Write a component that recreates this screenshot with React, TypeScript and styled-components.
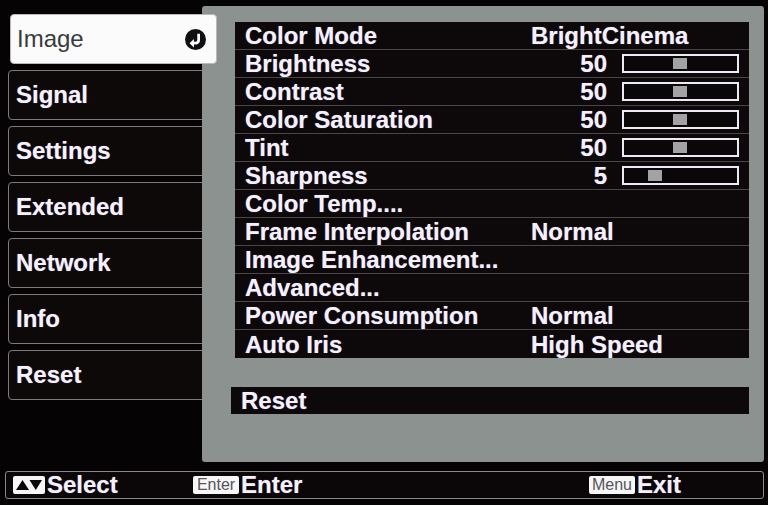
import React from "react";
import styled, { createGlobalStyle, css } from "styled-components";

const GlobalStyle = createGlobalStyle`
  html, body {
    margin: 0;
    padding: 0;
    background: #060304;
  }
  body {
    font-family: "Liberation Sans", Arial, sans-serif;
    color: #f5f1fa;
  }
`;

const Screen = styled.div`
  width: 768px;
  height: 505px;
  box-sizing: border-box;
  padding: 6px 4px 0 5px;
  display: flex;
  flex-direction: column;
  gap: 9px;
  background: #060304;
  overflow: hidden;
`;

const Main = styled.div`
  display: flex;
  height: 456px;
`;

const TabColumn = styled.div`
  width: 194px;
  padding: 8px 0 0 3px;
  display: flex;
  flex-direction: column;
  gap: 6px;
`;

const Tab = styled.div<{ $active?: boolean }>`
  height: 50px;
  box-sizing: border-box;
  border: 1px solid #7d7b80;
  border-radius: 4px;
  background: #0d0909;
  display: flex;
  align-items: center;
  justify-content: space-between;
  padding: 0 10px 0 7px;
  margin-right: -8px;
  font-size: 24px;
  font-weight: bold;
  color: #f6f2fa;
  text-shadow: 0 0 1px rgba(200, 180, 255, 0.6);

  ${(p) =>
    p.$active &&
    css`
      position: relative;
      z-index: 3;
      background: #fbfbfb;
      border-color: #b9b6bd;
      margin: 0 -15px 0 2px;
      padding-left: 6px;
      color: #3a3a3c;
      font-weight: normal;
      text-shadow: none;
    `}
`;

const Panel = styled.div`
  flex: 1;
  position: relative;
  z-index: 1;
  background: #8c928f;
  border-radius: 3px;
  padding: 16px 15px 0 33px;
  display: flex;
  flex-direction: column;
`;

const RowList = styled.div`
  display: flex;
  flex-direction: column;
  background: #0d090a;
`;

const Row = styled.div<{ $last?: boolean }>`
  height: 28px;
  box-sizing: border-box;
  display: grid;
  grid-template-columns: 286px 1fr;
  align-items: center;
  padding-left: 10px;
  font-size: 24px;
  font-weight: bold;
  line-height: 27px;
  border-bottom: ${(p) => (p.$last ? "none" : "1px solid #4a4648")};
  white-space: nowrap;
  text-shadow: 0 0 1px rgba(200, 180, 255, 0.6);
`;

const Label = styled.span``;

const Value = styled.div`
  display: flex;
  align-items: center;
`;

const Number = styled.span`
  width: 76px;
  text-align: right;
  margin-right: 15px;
`;

const Track = styled.div`
  width: 117px;
  height: 19px;
  box-sizing: border-box;
  border: 2px solid #eee9f5;
  background: #0a0708;
  position: relative;
`;

const Knob = styled.div`
  position: absolute;
  top: 2px;
  width: 14px;
  height: 11px;
  background: #a3a3a5;
`;

const ResetRow = styled.div`
  margin-top: 29px;
  height: 27px;
  background: #0d090a;
  padding-left: 10px;
  font-size: 24px;
  font-weight: bold;
  line-height: 28px;
  margin-left: -4px;
  text-shadow: 0 0 1px rgba(200, 180, 255, 0.6);
`;

const Footer = styled.div`
  height: 28px;
  box-sizing: border-box;
  border: 1px solid #8a888c;
  border-radius: 3px;
  background: #0b0708;
  display: flex;
  align-items: center;
  padding-left: 7px;
  font-size: 24px;
  font-weight: bold;
  text-shadow: 0 0 1px rgba(200, 180, 255, 0.6);
`;

const Hint = styled.div<{ $width: number }>`
  width: ${(p) => p.$width}px;
  display: flex;
  align-items: center;
  gap: 2px;
`;

const KeyCap = styled.span`
  background: #f7f7f7;
  color: #55555a;
  font-size: 16px;
  font-weight: normal;
  height: 18px;
  line-height: 18px;
  width: 46px;
  text-align: center;
  border-radius: 2px;
  text-shadow: none;
`;

const EnterIcon = () => (
  <svg width="21" height="21" viewBox="0 0 20 20">
    <circle cx="10" cy="10" r="10" fill="#101012" />
    <path
      d="M13 4.5 V10.5 Q13 13.5 10 13.5 H7.5"
      stroke="#fff"
      strokeWidth="2.6"
      fill="none"
    />
    <path d="M8.5 9.5 L4.3 13.5 L8.5 17.5 Z" fill="#fff" />
  </svg>
);

const UpDownIcon = () => (
  <svg width="32" height="18" viewBox="0 0 32 18">
    <rect width="32" height="18" rx="2" fill="#f7f7f7" />
    <polygon points="3,14 9.5,4 16,14" fill="#0b0708" />
    <polygon points="16.5,4 29,4 22.75,14" fill="#0b0708" />
  </svg>
);

type Item = {
  label: string;
  value?: string;
  level?: number;
};

const tabs = ["Image", "Signal", "Settings", "Extended", "Network", "Info", "Reset"];

const items: Item[] = [
  { label: "Color Mode", value: "BrightCinema" },
  { label: "Brightness", value: "50", level: 0.49 },
  { label: "Contrast", value: "50", level: 0.49 },
  { label: "Color Saturation", value: "50", level: 0.49 },
  { label: "Tint", value: "50", level: 0.49 },
  { label: "Sharpness", value: "5", level: 0.24 },
  { label: "Color Temp...." },
  { label: "Frame Interpolation", value: "Normal" },
  { label: "Image Enhancement..." },
  { label: "Advanced..." },
  { label: "Power Consumption", value: "Normal" },
  { label: "Auto Iris", value: "High Speed" },
];

export default function App() {
  return (
    <>
      <GlobalStyle />
      <Screen>
        <Main>
          <TabColumn>
            {tabs.map((t, i) => (
              <Tab key={t} $active={i === 0}>
                {t}
                {i === 0 && <EnterIcon />}
              </Tab>
            ))}
          </TabColumn>
          <Panel>
            <RowList>
              {items.map((it, i) => (
                <Row key={it.label} $last={i === items.length - 1}>
                  <Label>{it.label}</Label>
                  {it.level !== undefined ? (
                    <Value>
                      <Number>{it.value}</Number>
                      <Track>
                        <Knob style={{ left: `${it.level * 99}px` }} />
                      </Track>
                    </Value>
                  ) : (
                    <Value>{it.value}</Value>
                  )}
                </Row>
              ))}
            </RowList>
            <ResetRow>Reset</ResetRow>
          </Panel>
        </Main>
        <Footer>
          <Hint $width={180}>
            <UpDownIcon />
            Select
          </Hint>
          <Hint $width={396}>
            <KeyCap>Enter</KeyCap>
            Enter
          </Hint>
          <Hint $width={120}>
            <KeyCap>Menu</KeyCap>
            Exit
          </Hint>
        </Footer>
      </Screen>
    </>
  );
}
